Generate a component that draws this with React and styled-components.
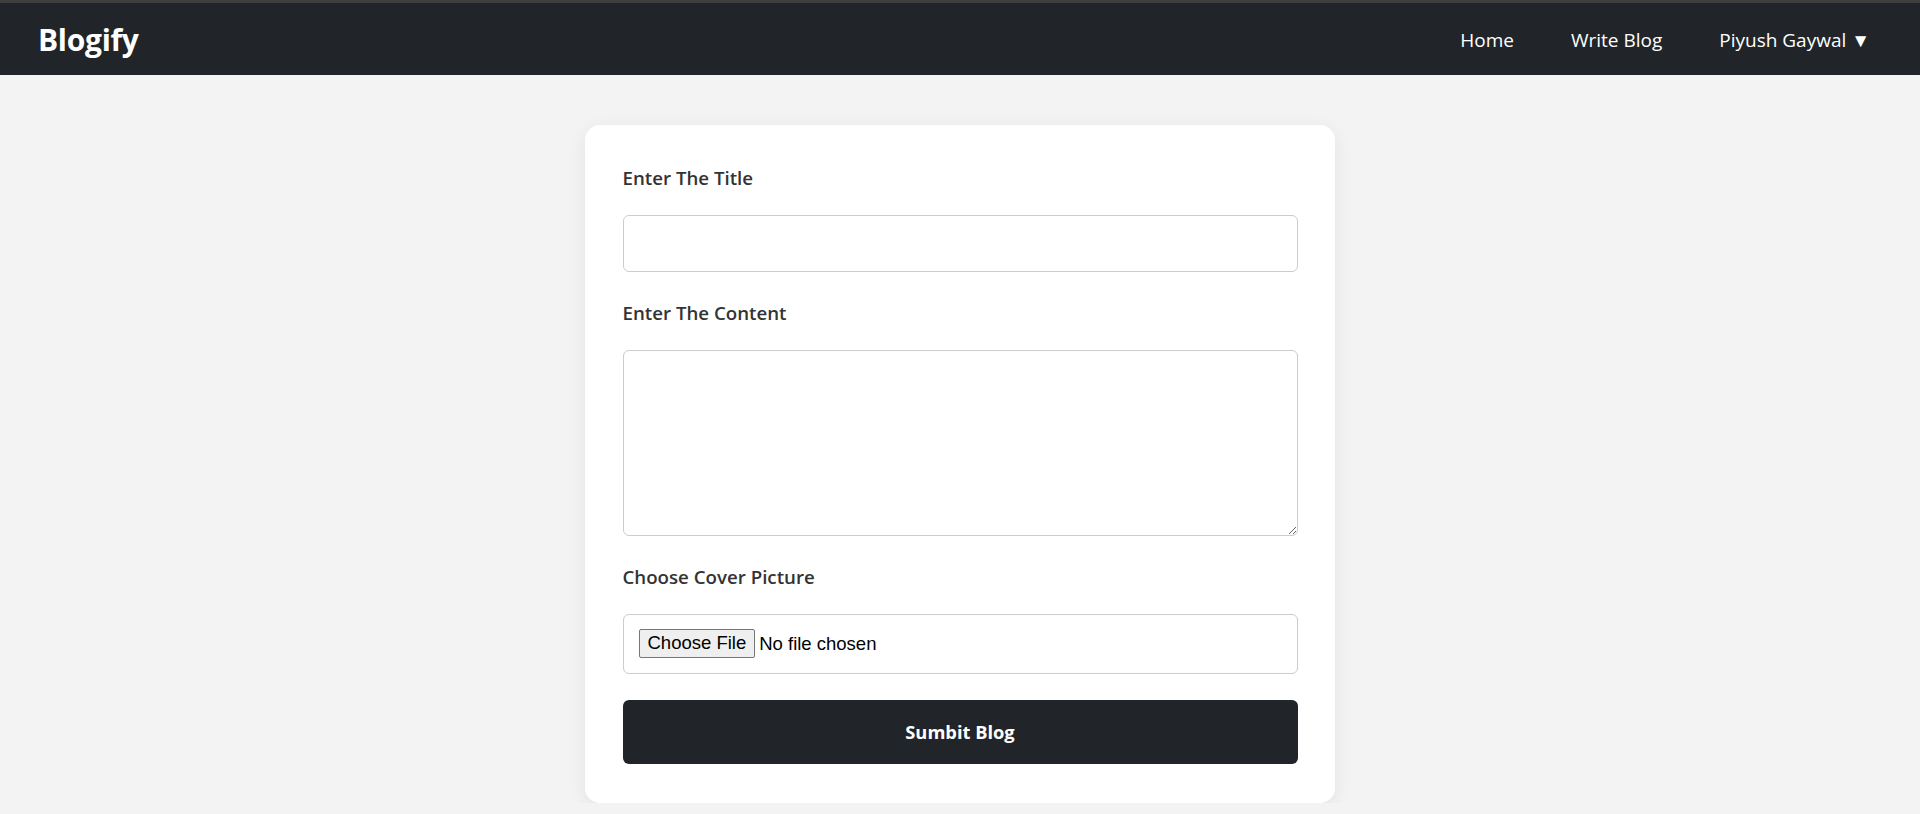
import React from "react";
import styled, { createGlobalStyle } from "styled-components";

const GlobalStyle = createGlobalStyle`
  * { box-sizing: border-box; }
  html, body { margin: 0; padding: 0; }
  body {
    background: #f3f3f3;
    font-family: "Open Sans", "Noto Sans", Arial, sans-serif;
    color: #333;
  }
`;

const Navbar = styled.nav`
  height: 75px;
  border-top: 3px solid #3f3f3f;
  background: #212529;
  display: flex;
  align-items: center;
  justify-content: space-between;
  padding: 0 50px 0 38px;
`;

const Logo = styled.a`
  color: #fff;
  font-size: 30px;
  font-weight: 700;
  letter-spacing: -0.3px;
  text-decoration: none;
`;

const NavLinks = styled.ul`
  display: flex;
  align-items: center;
  gap: 57px;
  list-style: none;
  margin: 0;
  padding: 2px 0 0;
`;

const NavLink = styled.a`
  color: #fff;
  font-size: 19px;
  text-decoration: none;
  white-space: nowrap;
`;

const Main = styled.main`
  display: flex;
  justify-content: center;
  padding-top: 50px;
`;

const Card = styled.div`
  width: 750px;
  background: #fff;
  border-radius: 15px;
  padding: 37.5px 37.5px 39px;
  box-shadow: 0 4px 18px rgba(0, 0, 0, 0.07);
`;

const Form = styled.form`
  display: flex;
  flex-direction: column;
  gap: 26px;
`;

const Field = styled.div`
  display: flex;
  flex-direction: column;
  gap: 22px;
`;

const Label = styled.label`
  font-size: 18.7px;
  font-weight: 600;
  line-height: 30px;
  color: #333;
`;

const controlBase = `
  width: 100%;
  border: 1px solid #cccccc;
  border-radius: 6px;
  background: #fff;
  outline: none;
`;

const TextInput = styled.input`
  ${controlBase}
  height: 57px;
  padding: 0 15px;
  font-size: 18px;
  font-family: "Liberation Sans", Arial, sans-serif;
`;

const TextArea = styled.textarea`
  ${controlBase}
  height: 186px;
  padding: 15px;
  font-size: 18px;
  font-family: "Liberation Sans", Arial, sans-serif;
  resize: vertical;
  display: block;
`;

const FileInput = styled.input`
  ${controlBase}
  height: 60px;
  padding: 14px 15px;
  font-size: 18.5px;
  font-family: "Liberation Sans", Arial, sans-serif;
  color: #000;

  &::file-selector-button {
    font: inherit;
    height: 29px;
    padding: 0 8px;
    margin-right: 4px;
    background: #efefef;
    border: 1px solid #767676;
    border-radius: 2px;
    color: #000;
    cursor: pointer;
  }
`;

const SubmitButton = styled.button`
  height: 64px;
  width: 100%;
  border: none;
  border-radius: 6px;
  background: #212529;
  color: #fff;
  font-family: "Open Sans", "Noto Sans", Arial, sans-serif;
  font-size: 18.3px;
  font-weight: 700;
  cursor: pointer;
`;

export default function App() {
  return (
    <>
      <GlobalStyle />
      <Navbar>
        <Logo href="#">Blogify</Logo>
        <NavLinks>
          <li><NavLink href="#">Home</NavLink></li>
          <li><NavLink href="#">Write Blog</NavLink></li>
          <li><NavLink href="#">Piyush Gaywal ▼</NavLink></li>
        </NavLinks>
      </Navbar>
      <Main>
        <Card>
          <Form onSubmit={(e) => e.preventDefault()}>
            <Field>
              <Label htmlFor="title">Enter The Title</Label>
              <TextInput id="title" type="text" />
            </Field>
            <Field>
              <Label htmlFor="content">Enter The Content</Label>
              <TextArea id="content" />
            </Field>
            <Field>
              <Label htmlFor="cover">Choose Cover Picture</Label>
              <FileInput id="cover" type="file" />
            </Field>
            <SubmitButton type="submit">Sumbit Blog</SubmitButton>
          </Form>
        </Card>
      </Main>
    </>
  );
}
